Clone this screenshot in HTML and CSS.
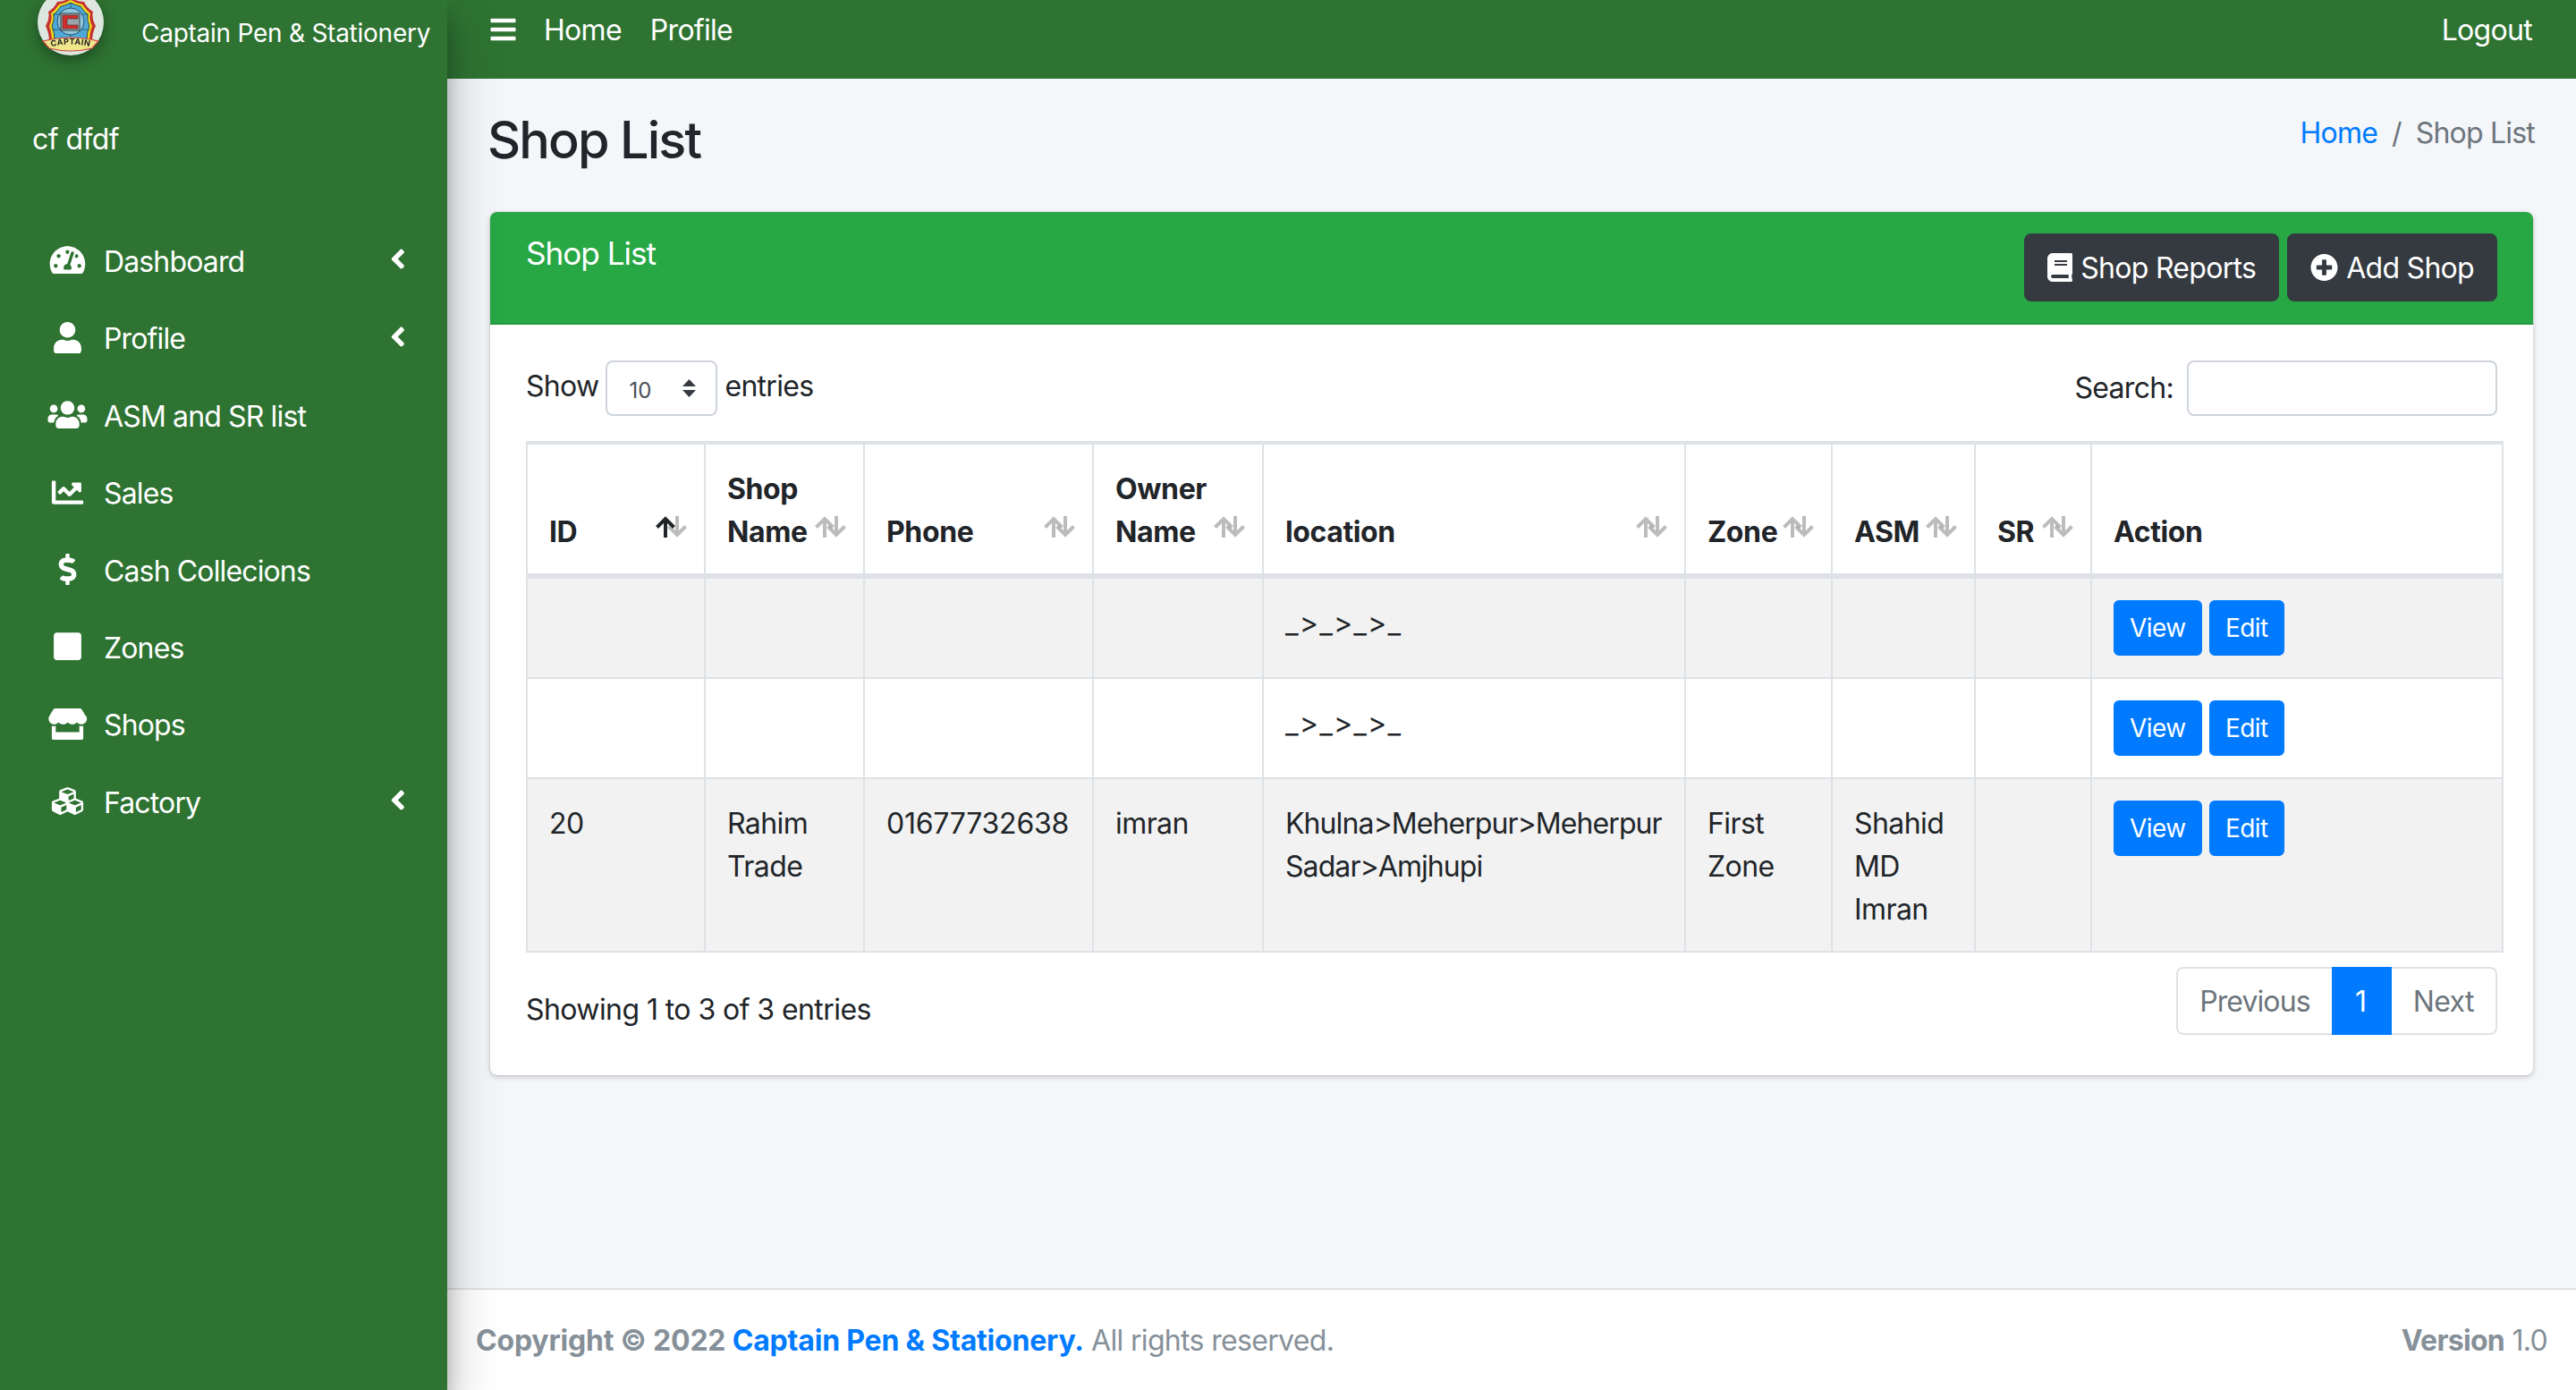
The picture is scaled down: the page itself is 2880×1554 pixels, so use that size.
FILE: index.html
```html
<!DOCTYPE html>
<html lang="en">
<head>
    <meta charset="UTF-8">
    <title>Shop List</title>
    <link rel="stylesheet" href="styles.css">
</head>
<body>
    <svg class="sprite" xmlns="http://www.w3.org/2000/svg">
        <symbol id="i-dashboard" viewBox="0 0 576 512"><path d="M288 32C128.94 32 0 160.94 0 320c0 52.8 14.25 102.26 39.06 144.8 5.61 9.62 16.3 15.2 27.44 15.2h443c11.14 0 21.83-5.58 27.44-15.2C561.75 422.26 576 372.8 576 320c0-159.06-128.94-288-288-288zm0 64c14.71 0 26.58 10.13 30.32 23.65-1.11 2.26-2.64 4.23-3.45 6.67l-9.22 27.67c-5.13 3.49-10.97 6.01-17.64 6.01-17.67 0-32-14.33-32-32S270.33 96 288 96zM96 384c-17.67 0-32-14.33-32-32s14.33-32 32-32 32 14.33 32 32-14.33 32-32 32zm48-160c-17.67 0-32-14.33-32-32s14.33-32 32-32 32 14.33 32 32-14.33 32-32 32zm246.77-72.41l-61.33 184C343.13 347.33 352 364.54 352 384c0 11.72-3.38 22.55-8.88 32H232.88c-5.5-9.45-8.88-20.28-8.88-32 0-33.94 26.5-61.43 59.9-63.59l61.34-184.01c4.17-12.56 17.73-19.45 30.36-15.17 12.57 4.19 19.35 17.79 15.17 30.36zm14.66 57.2l15.52-46.55c3.47-1.29 7.13-2.23 11.05-2.23 17.67 0 32 14.33 32 32s-14.33 32-32 32c-11.38-.01-20.89-6.28-26.57-15.22zM480 384c-17.67 0-32-14.33-32-32s14.33-32 32-32 32 14.33 32 32-14.33 32-32 32z"/></symbol>
        <symbol id="i-user" viewBox="0 0 448 512"><path d="M224 256c70.7 0 128-57.3 128-128S294.7 0 224 0 96 57.3 96 128s57.3 128 128 128zm89.6 32h-16.7c-22.2 10.2-46.9 16-72.9 16s-50.6-5.8-72.9-16h-16.7C60.2 288 0 348.2 0 422.4V464c0 26.5 21.5 48 48 48h352c26.5 0 48-21.5 48-48v-41.6c0-74.2-60.2-134.4-134.4-134.4z"/></symbol>
        <symbol id="i-users" viewBox="0 0 640 512"><path d="M96 224c35.3 0 64-28.7 64-64s-28.7-64-64-64-64 28.7-64 64 28.7 64 64 64zm448 0c35.3 0 64-28.7 64-64s-28.7-64-64-64-64 28.7-64 64 28.7 64 64 64zm32 32h-64c-17.6 0-33.5 7.1-45.1 18.6 40.3 22.1 68.9 62 75.1 109.4h66c17.7 0 32-14.3 32-32v-32c0-35.3-28.7-64-64-64zm-256 0c61.9 0 112-50.1 112-112S381.9 32 320 32 208 82.1 208 144s50.1 112 112 112zm76.8 32h-8.3c-20.8 10-43.9 16-68.5 16s-47.6-6-68.5-16h-8.3C179.6 288 128 339.6 128 403.2V432c0 26.5 21.5 48 48 48h288c26.5 0 48-21.5 48-48v-28.8c0-63.6-51.6-115.2-115.2-115.2zm-223.7-13.4C161.5 263.1 145.6 256 128 256H64c-35.3 0-64 28.7-64 64v32c0 17.7 14.3 32 32 32h65.9c6.3-47.4 34.9-87.3 75.2-109.4z"/></symbol>
        <symbol id="i-chart" viewBox="0 0 512 512"><path d="M496 384H64V80c0-8.84-7.16-16-16-16H16C7.16 64 0 71.16 0 80v336c0 17.67 14.33 32 32 32h464c8.84 0 16-7.16 16-16v-32c0-8.84-7.16-16-16-16zM464 96H345.94c-21.38 0-32.09 25.85-16.97 40.97l32.4 32.4L288 242.75l-73.37-73.37c-12.5-12.5-32.76-12.5-45.25 0l-68.69 68.69c-6.25 6.25-6.25 16.38 0 22.63l22.62 22.62c6.25 6.25 16.38 6.25 22.63 0L192 237.25l73.37 73.37c12.5 12.5 32.76 12.5 45.25 0l96-96 32.4 32.4c15.12 15.12 40.97 4.41 40.97-16.97V112c.01-8.84-7.15-16-16-16z"/></symbol>
        <symbol id="i-dollar" viewBox="0 0 288 512"><path d="M209.2 233.4l-108-31.6C88.7 198.2 80 186.5 80 173.5c0-16.3 13.2-29.5 29.5-29.5h66.3c12.2 0 24.2 3.7 34.2 10.5 6.1 4.1 14.3 3.1 19.5-2l34.8-34c7.1-6.9 6.1-18.4-1.8-24.5C238 74.8 207.4 64.1 176 64V16c0-8.8-7.2-16-16-16h-32c-8.8 0-16 7.2-16 16v48h-2.5C45.8 64-5.4 118.7.5 183.6c4.2 46.1 39.4 83.6 83.8 96.6l102.5 30c12.5 3.7 21.2 15.3 21.2 28.3 0 16.3-13.2 29.5-29.5 29.5h-66.3C100 368 88 364.3 78 357.5c-6.1-4.1-14.3-3.1-19.5 2l-34.8 34c-7.1 6.9-6.1 18.4 1.8 24.5 24.5 19.2 55.1 29.9 86.5 30v48c0 8.8 7.2 16 16 16h32c8.8 0 16-7.2 16-16v-48.2c46.6-.9 90.3-28.6 105.7-72.7 21.5-61.6-14.6-124.8-72.5-141.7z"/></symbol>
        <symbol id="i-square" viewBox="0 0 448 512"><path d="M400 32H48C21.5 32 0 53.5 0 80v352c0 26.5 21.5 48 48 48h352c26.5 0 48-21.5 48-48V80c0-26.5-21.5-48-48-48z"/></symbol>
        <symbol id="i-store" viewBox="0 0 616 512"><path d="M602 118.6L537.1 15C531.3 5.7 521 0 510 0H106C95 0 84.7 5.7 78.9 15L14 118.6c-33.9 54.1-3.9 129.3 59.4 137.9 4.6.6 9.2.9 13.7.9 29.9 0 56.4-13.1 74.8-33.4 18.4 20.3 45 33.4 74.8 33.4 29.9 0 56.4-13.1 74.8-33.4 18.4 20.3 45 33.4 74.8 33.4 29.9 0 56.4-13.1 74.8-33.4 18.5 20.3 45 33.4 74.8 33.4 4.6 0 9.1-.3 13.7-.9 63.5-8.5 93.6-83.7 59.6-137.9zM529.5 288c-10 0-19.9-1.5-29.5-3.8V384H116v-99.8c-9.6 2.2-19.5 3.8-29.5 3.8-6 0-12.1-.4-18-1.2-5.6-.8-11.1-2.1-16.4-3.6V480c0 17.7 14.3 32 32 32h448c17.7 0 32-14.3 32-32V283.2c-5.4 1.6-10.8 2.9-16.4 3.6-6.1.8-12.1 1.2-18.2 1.2z"/></symbol>
        <symbol id="i-cubes" viewBox="0 0 512 512"><path d="M488.6 250.2L392 214V105.5c0-15-9.3-28.4-23.4-33.7l-100-37.5c-8.1-3.1-17.1-3.1-25.3 0l-100 37.5c-14.1 5.3-23.4 18.7-23.4 33.7V214l-96.6 36.2C9.3 255.5 0 268.9 0 283.9V394c0 13.6 7.7 26.1 19.9 32.2l100 50c10.1 5.1 22.1 5.1 32.2 0l103.9-52 103.9 52c10.1 5.1 22.1 5.1 32.2 0l100-50c12.2-6.1 19.9-18.6 19.9-32.2V283.9c0-15-9.3-28.4-23.4-33.7zM358 214.8l-85 31.9v-68.2l85-37v73.3zM154 104.1l102-38.2 102 38.2v.6l-102 41.4-102-41.4v-.6zm84 291.1l-85 42.5v-79.1l85-38.8v75.4zm0-112l-102 41.4-102-41.4v-.6l102-38.2 102 38.2v.6zm240 112l-85 42.5v-79.1l85-38.8v75.4zm0-112l-102 41.4-102-41.4v-.6l102-38.2 102 38.2v.6z"/></symbol>
        <symbol id="i-book" viewBox="0 0 448 512"><path d="M448 360V24c0-13.3-10.7-24-24-24H96C43 0 0 43 0 96v320c0 53 43 96 96 96h328c13.3 0 24-10.7 24-24v-16c0-7.5-3.5-14.3-8.9-18.7-4.2-15.4-4.2-59.3 0-74.7 5.4-4.3 8.9-11.1 8.9-18.6zM128 134c0-3.3 2.7-6 6-6h212c3.3 0 6 2.7 6 6v20c0 3.3-2.7 6-6 6H134c-3.3 0-6-2.7-6-6v-20zm0 64c0-3.3 2.7-6 6-6h212c3.3 0 6 2.7 6 6v20c0 3.3-2.7 6-6 6H134c-3.3 0-6-2.7-6-6v-20zm253.4 250H96c-17.7 0-32-14.3-32-32 0-17.6 14.4-32 32-32h285.4c-1.9 17.1-1.9 46.9 0 64z"/></symbol>
        <symbol id="i-plus" viewBox="0 0 512 512"><path d="M256 8C119 8 8 119 8 256s111 248 248 248 248-111 248-248S393 8 256 8zm144 276c0 6.6-5.4 12-12 12h-92v92c0 6.6-5.4 12-12 12h-56c-6.6 0-12-5.4-12-12v-92h-92c-6.6 0-12-5.4-12-12v-56c0-6.6 5.4-12 12-12h92v-92c0-6.6 5.4-12 12-12h56c6.6 0 12 5.4 12 12v92h92c6.6 0 12 5.4 12 12v56z"/></symbol>
        <symbol id="i-bars" viewBox="0 0 448 512"><path d="M16 132h416c8.837 0 16-7.163 16-16V76c0-8.837-7.163-16-16-16H16C7.163 60 0 67.163 0 76v40c0 8.837 7.163 16 16 16zm0 160h416c8.837 0 16-7.163 16-16v-40c0-8.837-7.163-16-16-16H16c-8.837 0-16 7.163-16 16v40c0 8.837 7.163 16 16 16zm0 160h416c8.837 0 16-7.163 16-16v-40c0-8.837-7.163-16-16-16H16c-8.837 0-16 7.163-16 16v40c0 8.837 7.163 16 16 16z"/></symbol>
        <symbol id="i-angle" viewBox="0 0 256 512"><path d="M31.7 239l136-136c9.4-9.4 24.6-9.4 33.9 0l22.6 22.6c9.4 9.4 9.4 24.6 0 33.9L127.9 256l96.4 96.4c9.4 9.4 9.4 24.6 0 33.9L201.7 409c-9.4 9.4-24.6 9.4-33.9 0l-136-136c-9.5-9.4-9.5-24.6-.1-34z"/></symbol>
    </svg>

    <div class="wrapper">
        <aside class="sidebar">
            <div class="brand">
                <svg class="brand-logo" viewBox="0 0 74 62" xmlns="http://www.w3.org/2000/svg">
                    <circle cx="37" cy="25" r="37" fill="#dde7e0"/>
                    <path d="M37 -3 Q44 2 52 2 Q55 9 62 13 Q60 21 65 29 Q61 37 61 47 L13 47 Q13 37 9 29 Q14 21 12 13 Q19 9 22 2 Q30 2 37 -3Z" fill="#c8322f"/>
                    <path d="M37 0 Q44 4 50 5 Q54 11 59 15 Q57 22 61 29 Q58 36 58 46 L16 46 Q16 36 13 29 Q17 22 15 15 Q20 11 24 5 Q30 4 37 0Z" fill="#efe21f"/>
                    <path d="M37 3 Q43 6 48 7 Q52 13 56 16 Q55 23 58 29 Q55 36 55 46 L19 46 Q19 36 16 29 Q19 23 18 16 Q22 13 26 7 Q31 6 37 3Z" fill="#4ea9d8" stroke="#222" stroke-width=".8"/>
                    <path d="M37 4V46M17 16H57M16 33H58" stroke="#27516b" stroke-width=".8" fill="none"/>
                    <circle cx="37" cy="24" r="15" fill="#8fc6de" stroke="#27516b" stroke-width="1"/>
                    <rect x="26" y="15" width="21" height="19" fill="#9aa5ab" stroke="#222" stroke-width=".8"/>
                    <path d="M28 17H45V21H33V28H45V32H28Z" fill="#d42e2b" stroke="#222" stroke-width=".5"/>
                    <path d="M6 46 Q37 38 68 46 L61 54 Q37 60 13 54Z" fill="#efe58a" stroke="#cf3d3d" stroke-width="1.2"/>
                    <path id="logo-arc" d="M11 53 Q37 46 63 53" fill="none"/>
                    <text class="logo-text"><textPath href="#logo-arc" startOffset="50%" text-anchor="middle">CAPTAIN</textPath></text>
                </svg>
                <span class="brand-text">Captain Pen &amp; Stationery</span>
            </div>
            <div class="user-name">cf dfdf</div>
            <ul class="side-menu">
                <li><a class="side-link" href="#"><svg class="side-icon"><use href="#i-dashboard"/></svg><span>Dashboard</span><svg class="side-angle"><use href="#i-angle"/></svg></a></li>
                <li><a class="side-link" href="#"><svg class="side-icon"><use href="#i-user"/></svg><span>Profile</span><svg class="side-angle"><use href="#i-angle"/></svg></a></li>
                <li><a class="side-link" href="#"><svg class="side-icon"><use href="#i-users"/></svg><span>ASM and SR list</span></a></li>
                <li><a class="side-link" href="#"><svg class="side-icon"><use href="#i-chart"/></svg><span>Sales</span></a></li>
                <li><a class="side-link" href="#"><svg class="side-icon"><use href="#i-dollar"/></svg><span>Cash Collecions</span></a></li>
                <li><a class="side-link" href="#"><svg class="side-icon"><use href="#i-square"/></svg><span>Zones</span></a></li>
                <li><a class="side-link" href="#"><svg class="side-icon"><use href="#i-store"/></svg><span>Shops</span></a></li>
                <li><a class="side-link" href="#"><svg class="side-icon"><use href="#i-cubes"/></svg><span>Factory</span><svg class="side-angle"><use href="#i-angle"/></svg></a></li>
            </ul>
        </aside>

        <div class="main">
            <nav class="topbar">
                <svg class="topbar-toggle"><use href="#i-bars"/></svg>
                <a class="topbar-link" href="#">Home</a>
                <a class="topbar-link" href="#">Profile</a>
                <a class="topbar-link topbar-logout" href="#">Logout</a>
            </nav>

            <main class="content">
                <div class="content-head">
                    <h1>Shop List</h1>
                    <ol class="breadcrumb">
                        <li><a href="#">Home</a></li>
                        <li class="breadcrumb-sep">/</li>
                        <li>Shop List</li>
                    </ol>
                </div>

                <section class="card">
                    <div class="card-header">
                        <h3 class="card-title">Shop List</h3>
                        <div class="card-tools">
                            <a class="btn btn-dark" href="#"><svg class="btn-icon btn-icon-book"><use href="#i-book"/></svg>Shop Reports</a>
                            <a class="btn btn-dark" href="#"><svg class="btn-icon"><use href="#i-plus"/></svg>Add Shop</a>
                        </div>
                    </div>
                    <div class="card-body">
                        <div class="table-controls">
                            <label class="length-control">Show <select class="length-select"><option>10</option><option>25</option></select> entries</label>
                            <label class="search-control">Search: <input class="search-input" type="search"></label>
                        </div>

                        <table class="data-table">
                            <colgroup>
                                <col class="col-id"><col class="col-name"><col class="col-phone"><col class="col-owner"><col class="col-location"><col class="col-zone"><col class="col-asm"><col class="col-sr"><col class="col-action">
                            </colgroup>
                            <thead>
                                <tr>
                                    <th class="sortable sort-asc">ID</th>
                                    <th class="sortable">Shop Name</th>
                                    <th class="sortable">Phone</th>
                                    <th class="sortable">Owner Name</th>
                                    <th class="sortable">location</th>
                                    <th class="sortable">Zone</th>
                                    <th class="sortable">ASM</th>
                                    <th class="sortable">SR</th>
                                    <th>Action</th>
                                </tr>
                            </thead>
                            <tbody>
                                <tr>
                                    <td></td><td></td><td></td><td></td>
                                    <td class="loc-empty">_&gt;_&gt;_&gt;_</td>
                                    <td></td><td></td><td></td>
                                    <td class="actions"><a class="btn btn-sm" href="#">View</a> <a class="btn btn-sm" href="#">Edit</a></td>
                                </tr>
                                <tr>
                                    <td></td><td></td><td></td><td></td>
                                    <td class="loc-empty">_&gt;_&gt;_&gt;_</td>
                                    <td></td><td></td><td></td>
                                    <td class="actions"><a class="btn btn-sm" href="#">View</a> <a class="btn btn-sm" href="#">Edit</a></td>
                                </tr>
                                <tr>
                                    <td>20</td>
                                    <td>Rahim Trade</td>
                                    <td class="phone">01677732638</td>
                                    <td>imran</td>
                                    <td class="loc">Khulna&gt;Meherpur&gt;Meherpur<br>Sadar&gt;Amjhupi</td>
                                    <td>First Zone</td>
                                    <td>Shahid MD Imran</td>
                                    <td></td>
                                    <td class="actions"><a class="btn btn-sm" href="#">View</a> <a class="btn btn-sm" href="#">Edit</a></td>
                                </tr>
                            </tbody>
                        </table>

                        <div class="table-footer">
                            <div class="table-info">Showing 1 to 3 of 3 entries</div>
                            <ul class="pagination">
                                <li><a href="#">Previous</a></li>
                                <li class="active"><a href="#">1</a></li>
                                <li><a href="#">Next</a></li>
                            </ul>
                        </div>
                    </div>
                </section>
            </main>

            <footer class="footer">
                <div><strong>Copyright © 2022 <a href="#">Captain Pen &amp; Stationery.</a></strong> All rights reserved.</div>
                <div class="footer-version"><strong>Version</strong> 1.0</div>
            </footer>
        </div>
    </div>
</body>
</html>
```

FILE: styles.css
```css
:root {
    --sidebar-green: #2e7332;
    --header-green: #28a745;
    --blue: #007bff;
    --line: #dee2e6;
    --text: #212529;
    --muted: #6c757d;
}

* {
    box-sizing: border-box;
    margin: 0;
    padding: 0;
}

body {
    font-family: Inter, "Noto Sans", sans-serif;
    font-size: 32px;
    line-height: 48px;
    letter-spacing: -0.018em;
    color: var(--text);
    background: #f4f6f9;
    overflow: hidden;
}

a {
    text-decoration: none;
    color: var(--blue);
}

ul, ol {
    list-style: none;
}

.sprite {
    display: none;
}

.wrapper {
    display: flex;
    height: 1554px;
}

/* sidebar */
.sidebar {
    flex: 0 0 500px;
    background: var(--sidebar-green);
    color: #fff;
    box-shadow: 0 28px 56px rgba(0, 0, 0, 0.25), 0 20px 20px rgba(0, 0, 0, 0.22);
    position: relative;
    z-index: 2;
}

.brand {
    display: flex;
    align-items: flex-start;
    height: 88px;
    padding-left: 42px;
}

.brand-logo {
    width: 74px;
    height: 62px;
    filter: drop-shadow(0 6px 8px rgba(0, 0, 0, 0.35));
}

.logo-text {
    font-size: 9px;
    font-weight: 700;
    letter-spacing: 0.5px;
    fill: #222;
}

.brand-text {
    margin: 13px 0 0 42px;
    font-size: 28px;
    letter-spacing: -0.009em;
    white-space: nowrap;
}

.user-name {
    padding: 44px 0 0 36px;
}

.side-menu {
    padding: 73px 16px 0;
}

.side-menu li + li {
    margin-top: 6.4px;
}

.side-link {
    display: flex;
    align-items: center;
    height: 80px;
    padding: 0 30px 0 34px;
    color: #fff;
    letter-spacing: -0.027em;
}

.side-icon {
    flex: 0 0 51px;
    height: 35.2px;
    margin: -4px 15px 0 0;
    fill: #fff;
}

.side-angle {
    width: 17.6px;
    height: 35.2px;
    margin: -6px 0 0 auto;
    fill: #fff;
}

/* top bar */
.main {
    flex: 1;
    min-width: 0;
    display: flex;
    flex-direction: column;
}

.topbar {
    flex: 0 0 88px;
    display: flex;
    align-items: flex-start;
    padding: 10px 49px 0 48px;
    background: var(--sidebar-green);
    letter-spacing: -0.022em;
}

.topbar-toggle {
    width: 29px;
    height: 32px;
    margin: 7px 31px 0 0;
    fill: #fff;
}

.topbar-link {
    color: #fff;
    margin-right: 32px;
}

.topbar-logout {
    margin: 0 0 0 auto;
}

/* content */
.content {
    flex: 1;
    padding: 0 48px;
}

.content-head {
    display: flex;
    justify-content: space-between;
    align-items: flex-start;
    height: 149px;
    padding-top: 34px;
}

.content-head h1 {
    font-size: 57.6px;
    font-weight: 500;
    line-height: 1.2;
    letter-spacing: -1.9px;
    margin-left: -3px;
}

.breadcrumb {
    display: flex;
    margin: 3px -2px 0 0;
    color: var(--muted);
    letter-spacing: -0.025em;
}

.breadcrumb-sep {
    padding: 0 16px;
}

.card {
    background: #fff;
    border-radius: 8px;
    box-shadow: 0 0 2px rgba(0, 0, 0, 0.125), 0 2px 6px rgba(0, 0, 0, 0.2);
}

.card-header {
    display: flex;
    justify-content: space-between;
    align-items: flex-start;
    padding: 24px 40px;
    background: var(--header-green);
    border-bottom: 2px solid #259a40;
    border-radius: 8px 8px 0 0;
    color: #fff;
}

.card-title {
    font-size: 35.2px;
    font-weight: 400;
    line-height: 42px;
    margin-top: 1px;
    letter-spacing: -0.03em;
}

.card-tools {
    display: flex;
    gap: 9px;
}

.btn {
    display: inline-flex;
    align-items: center;
    border: 2px solid var(--blue);
    border-radius: 8px;
    padding: 13px 24px 11px;
    background: var(--blue);
    color: #fff;
}

.btn-dark {
    background: #343a40;
    border-color: #343a40;
    letter-spacing: -0.022em;
}

.btn-icon {
    width: 31px;
    height: 32px;
    margin: -3px 9px 0 0;
    fill: #fff;
}

.btn-icon-book {
    width: 28px;
}

.btn-sm {
    font-size: 28px;
    line-height: 42px;
    padding: 8px 16px;
    border-radius: 6px;
}

.card-body {
    padding: 40px 40px 45px;
}

.table-controls {
    display: flex;
    justify-content: space-between;
    height: 62px;
}

.length-control, .search-control {
    display: flex;
    align-items: center;
    gap: 8px;
    letter-spacing: -0.022em;
}

.length-control {
    padding-bottom: 4px;
}

.length-select, .search-input {
    height: 62px;
    border: 2px solid #ced4da;
    border-radius: 8px;
    background-color: #fff;
}

.length-select {
    width: 125px;
    padding: 4px 0 0 24px;
    margin-top: 4px;
    font: 24px Inter, sans-serif;
    color: #495057;
    appearance: none;
    background-image: url("data:image/svg+xml,%3Csvg xmlns='http://www.w3.org/2000/svg' width='17' height='20'%3E%3Cpath d='M8.5 0L16 8H1zM1 12h15l-7.5 8z' fill='%23343a40'/%3E%3C/svg%3E");
    background-repeat: no-repeat;
    background-position: 83px 19px;
}

.search-control {
    gap: 15px;
}

.search-input {
    width: 347px;
}

/* table */
.data-table {
    width: 2211px;
    margin-top: 28px;
    table-layout: fixed;
    border-collapse: separate;
    border-spacing: 0;
    border-left: 2px solid var(--line);
    border-top: 4px solid var(--line);
}

.col-id { width: 199px; }
.col-name { width: 178px; }
.col-phone { width: 256px; }
.col-owner { width: 190px; }
.col-location { width: 472px; }
.col-zone { width: 164px; }
.col-asm { width: 160px; }
.col-sr { width: 130px; }
.col-action { width: 460px; }

.data-table th, .data-table td {
    padding: 26px 24px 22px;
    text-align: left;
    vertical-align: top;
    border-right: 2px solid var(--line);
    border-bottom: 2px solid var(--line);
}

.data-table td.actions {
    padding: 24px;
}

.data-table td.loc {
    letter-spacing: -0.92px;
}

.data-table td.loc-empty {
    letter-spacing: 1.2px;
}

.data-table td.phone {
    letter-spacing: -0.25px;
}

.data-table th {
    position: relative;
    vertical-align: bottom;
    font-weight: 700;
    letter-spacing: -0.012em;
    border-bottom-width: 6px;
}

.data-table th.sortable {
    padding-right: 60px;
}

/* sort arrows sit over the header cell */
.sortable::before, .sortable::after {
    content: "";
    position: absolute;
    bottom: 40px;
    width: 22px;
    height: 24px;
    background-repeat: no-repeat;
    opacity: 0.3;
}

.sortable::before {
    right: 32px;
    background-image: url("data:image/svg+xml,%3Csvg xmlns='http://www.w3.org/2000/svg' width='22' height='24'%3E%3Cpath d='M11 3V24M1.5 12.5L11 3L20.5 12.5' fill='none' stroke='%23212529' stroke-width='4'/%3E%3C/svg%3E");
}

.sortable::after {
    right: 19px;
    background-image: url("data:image/svg+xml,%3Csvg xmlns='http://www.w3.org/2000/svg' width='22' height='24'%3E%3Cpath d='M11 0V21M1.5 11.5L11 21L20.5 11.5' fill='none' stroke='%23212529' stroke-width='4'/%3E%3C/svg%3E");
}

.sort-asc::before {
    opacity: 1;
}

.data-table tbody tr:nth-child(odd) td {
    background: #f2f2f2;
}

.table-footer {
    display: flex;
    justify-content: space-between;
    align-items: flex-start;
    margin-top: 16px;
}

.table-info {
    padding-top: 24px;
}

.pagination {
    display: flex;
}

.pagination a {
    display: block;
    padding: 13px 24px 11px;
    border: 2px solid var(--line);
    border-left-width: 0;
    background: #fff;
    color: var(--muted);
}

.pagination li:first-child a {
    border-left-width: 2px;
    border-radius: 8px 0 0 8px;
    border-right-width: 0;
    letter-spacing: -0.028em;
}

.pagination li:last-child a {
    border-radius: 0 8px 8px 0;
}

.pagination .active a {
    min-width: 67px;
    text-align: center;
    background: var(--blue);
    border-color: var(--blue);
    color: #fff;
}

/* footer */
.footer {
    flex: 0 0 114px;
    display: flex;
    justify-content: space-between;
    align-items: flex-start;
    padding: 33px 32px 0;
    border-top: 2px solid var(--line);
    background: #fff;
    color: #869099;
    letter-spacing: -0.021em;
}

.footer strong {
    letter-spacing: -0.006em;
}

.footer .footer-version strong {
    letter-spacing: -0.022em;
}
```
